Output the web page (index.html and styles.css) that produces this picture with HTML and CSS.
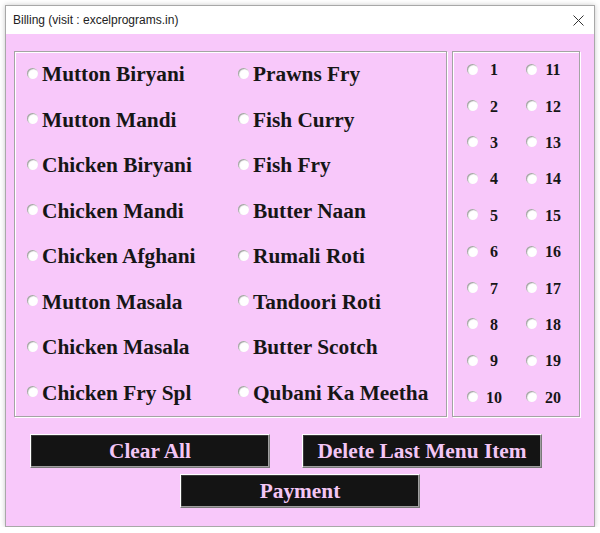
FILE: index.html
```html
<!DOCTYPE html>
<html>
<head>
<meta charset="utf-8">
<link rel="stylesheet" href="styles.css">
</head>
<body>
<div class="window">
  <div class="titlebar">
    <span class="title">Billing (visit : excelprograms.in)</span>
    <svg class="close" width="11" height="11" viewBox="0 0 11 11"><path d="M0.5 0.5 L10.5 10.5 M10.5 0.5 L0.5 10.5" stroke="#333" stroke-width="1" fill="none"/></svg>
  </div>
  <div class="content">
    <div class="frames">
      <div class="frame menu">
        <label class="item"><span class="radio"></span>Mutton Biryani</label>
        <label class="item"><span class="radio"></span>Prawns Fry</label>
        <label class="item"><span class="radio"></span>Mutton Mandi</label>
        <label class="item"><span class="radio"></span>Fish Curry</label>
        <label class="item"><span class="radio"></span>Chicken Biryani</label>
        <label class="item"><span class="radio"></span>Fish Fry</label>
        <label class="item"><span class="radio"></span>Chicken Mandi</label>
        <label class="item"><span class="radio"></span>Butter Naan</label>
        <label class="item"><span class="radio"></span>Chicken Afghani</label>
        <label class="item"><span class="radio"></span>Rumali Roti</label>
        <label class="item"><span class="radio"></span>Mutton Masala</label>
        <label class="item"><span class="radio"></span>Tandoori Roti</label>
        <label class="item"><span class="radio"></span>Chicken Masala</label>
        <label class="item"><span class="radio"></span>Butter Scotch</label>
        <label class="item"><span class="radio"></span>Chicken Fry Spl</label>
        <label class="item"><span class="radio"></span>Qubani Ka Meetha</label>
      </div>
      <div class="frame tables">
        <label class="num"><span class="radio"></span><span class="n">1</span></label>
        <label class="num"><span class="radio"></span><span class="n">11</span></label>
        <label class="num"><span class="radio"></span><span class="n">2</span></label>
        <label class="num"><span class="radio"></span><span class="n">12</span></label>
        <label class="num"><span class="radio"></span><span class="n">3</span></label>
        <label class="num"><span class="radio"></span><span class="n">13</span></label>
        <label class="num"><span class="radio"></span><span class="n">4</span></label>
        <label class="num"><span class="radio"></span><span class="n">14</span></label>
        <label class="num"><span class="radio"></span><span class="n">5</span></label>
        <label class="num"><span class="radio"></span><span class="n">15</span></label>
        <label class="num"><span class="radio"></span><span class="n">6</span></label>
        <label class="num"><span class="radio"></span><span class="n">16</span></label>
        <label class="num"><span class="radio"></span><span class="n">7</span></label>
        <label class="num"><span class="radio"></span><span class="n">17</span></label>
        <label class="num"><span class="radio"></span><span class="n">8</span></label>
        <label class="num"><span class="radio"></span><span class="n">18</span></label>
        <label class="num"><span class="radio"></span><span class="n">9</span></label>
        <label class="num"><span class="radio"></span><span class="n">19</span></label>
        <label class="num"><span class="radio"></span><span class="n">10</span></label>
        <label class="num"><span class="radio"></span><span class="n">20</span></label>
      </div>
    </div>
    <div class="btnrow first">
      <button class="btn">Clear All</button>
      <button class="btn">Delete Last Menu Item</button>
    </div>
    <div class="btnrow second">
      <button class="btn">Payment</button>
    </div>
  </div>
</div>
</body>
</html>
```

FILE: styles.css
```css
html, body {
  margin: 0;
  padding: 0;
  background: #ffffff;
}
.window {
  box-sizing: border-box;
  margin: 5px 0 0 5px;
  width: 590px;
  height: 522px;
  border: 1px solid #a8a8a8;
  box-shadow: 0 0 5px rgba(0, 0, 0, 0.22);
  display: flex;
  flex-direction: column;
}
.titlebar {
  height: 28px;
  background: #ffffff;
  display: flex;
  align-items: center;
  justify-content: space-between;
  padding: 0 10px 0 7px;
}
.title {
  font-family: "Liberation Sans", Arial, sans-serif;
  font-size: 12px;
  color: #222;
}
.close {
  display: block;
}
.content {
  flex: 1;
  background: #f8c8fa;
  padding: 17px 0 0 8px;
}
.frames {
  display: flex;
  gap: 5px;
}
.frame {
  box-sizing: border-box;
  height: 366px;
  border: 1px solid #a4a4a4;
  box-shadow: 1px 1px 0 #ffffff, inset 1px 1px 0 #ffffff;
  display: grid;
}
.menu {
  width: 433px;
  padding-left: 12px;
  grid-template-columns: 211px 1fr;
  grid-template-rows: repeat(8, 1fr);
}
.tables {
  width: 128px;
  padding-left: 14px;
  grid-template-columns: 59px 1fr;
  grid-template-rows: repeat(10, 1fr);
}
.item, .num {
  display: flex;
  align-items: center;
  font-family: "Liberation Serif", "Times New Roman", serif;
  font-weight: bold;
  color: #161616;
  white-space: nowrap;
}
.item {
  font-size: 21.33px;
}
.num {
  font-size: 16px;
}
.radio {
  box-sizing: border-box;
  width: 11px;
  height: 11px;
  border-radius: 50%;
  background: radial-gradient(circle at 60% 60%, #ffffff 45%, #f0f0f0 70%, #d8d8d8 100%);
  box-shadow: inset 1px 1px 1px #a0a0a0;
  flex: none;
}
.item .radio {
  margin: -3px 4px 0 0;
}
.num .radio {
  margin-top: -2px;
}
.n {
  width: 24px;
  margin-left: 4px;
  text-align: center;
}
.btnrow {
  display: flex;
}
.btnrow.first {
  margin-top: 17px;
  padding-left: 16px;
  gap: 32px;
}
.btnrow.second {
  margin-top: 6px;
  padding-left: 166px;
}
.btn {
  box-sizing: border-box;
  width: 240px;
  height: 34px;
  margin: 0;
  padding: 0;
  background: #141414;
  border: 1px solid;
  border-color: #ffffff #7a7a7a #7a7a7a #ffffff;
  box-shadow: inset -1px -1px 0 #a0a0a0, inset 1px 1px 0 #3a3a3a;
  color: #f3c6f5;
  font-family: "Liberation Serif", "Times New Roman", serif;
  font-weight: bold;
  font-size: 21.33px;
  text-align: center;
  cursor: default;
}
```
